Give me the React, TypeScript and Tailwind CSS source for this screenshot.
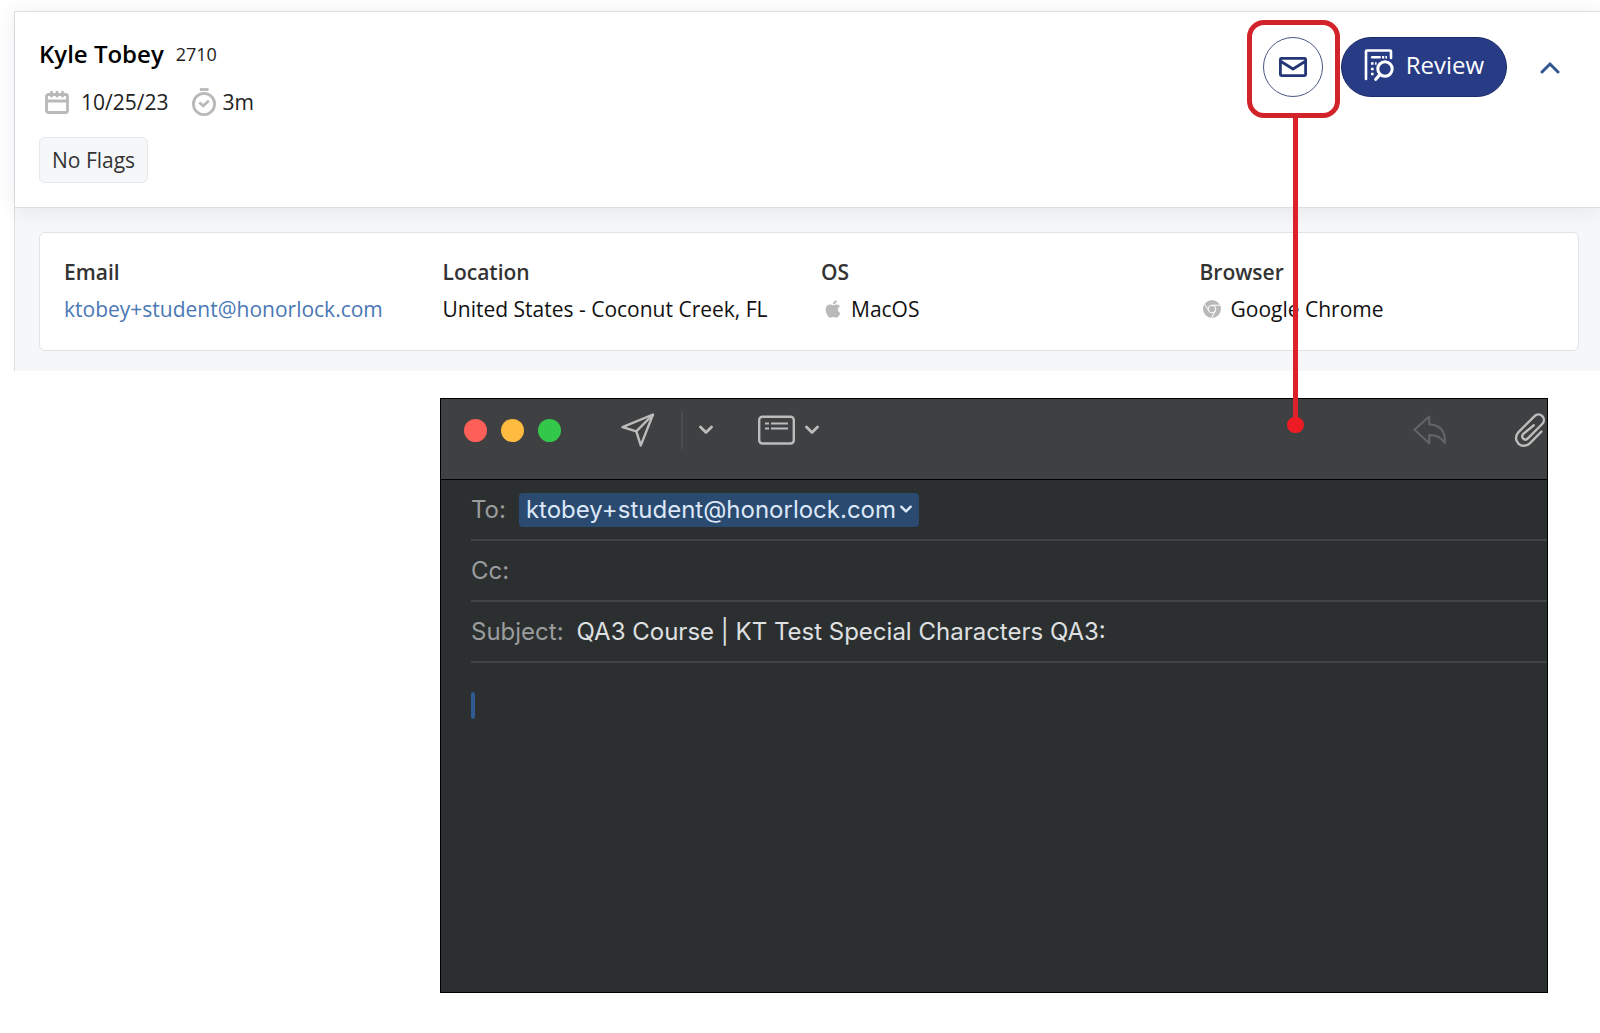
import type { ReactNode } from "react"
import { FaApple } from "react-icons/fa"

function CalendarIcon() {
  return (
    <svg width="24" height="24" viewBox="0 0 24 24" fill="none" stroke="#b9b9b9" strokeLinecap="round" aria-hidden="true">
      <rect x="1.5" y="4.5" width="21" height="18" rx="2" strokeWidth="2.8" />
      <path d="M2 11h20" strokeWidth="2.8" />
      <path d="M6.5 2.2v4M12 2.2v4M17.5 2.2v4" strokeWidth="2.8" />
    </svg>
  )
}

function StopwatchIcon() {
  return (
    <svg width="24" height="28" viewBox="0 0 24 28" fill="none" stroke="#b9b9b9" aria-hidden="true">
      <circle cx="12" cy="16" r="10.6" strokeWidth="2.8" />
      <path d="M7.8 1.5h8.8" strokeWidth="2.8" />
      <path d="M7.3 14.5l4 3.3 5.5-5" strokeWidth="2.8" />
    </svg>
  )
}

function MailIcon() {
  return (
    <svg width="28" height="20" viewBox="0 0 28 20" fill="none" stroke="#253676" strokeWidth="2.8" aria-hidden="true">
      <rect x="1.4" y="1.4" width="25.2" height="17.2" rx="1" />
      <path d="M2 4.5l12 7.5 12-7.5" strokeLinejoin="round" />
    </svg>
  )
}

function ReviewIcon() {
  return (
    <svg width="30" height="32" viewBox="0 0 30 32" fill="none" stroke="#fff" aria-hidden="true">
      <path d="M2 30V2.5q0-1 1-1h23q1 0 1 1V9" strokeWidth="2.6" strokeLinecap="round" strokeLinejoin="round" />
      <path d="M8.2 8.2h7.5" strokeWidth="2.6" strokeLinecap="round" />
      <path d="M18 8.2h2.2M21.4 8.2h1.6" strokeWidth="2.4" />
      <path d="M7 14.5h2.6M11 14.5h1.6M7 20h2.6M7 25h2.6" strokeWidth="2.5" />
      <circle cx="21" cy="20" r="7.2" strokeWidth="3" />
      <path d="M15.8 25.7l-4 4.5" strokeWidth="3.2" strokeLinecap="round" />
    </svg>
  )
}

function ChromeIcon() {
  return (
    <svg width="18" height="18" viewBox="0 0 18 18" fill="none" aria-hidden="true">
      <circle cx="9" cy="9" r="9" fill="#b9b9b9" />
      <circle cx="9" cy="9" r="3.8" stroke="#fff" strokeWidth="1" />
      <path d="M9 5.2h8M5.7 10.9L1.9 4.4M12.3 10.9L8.6 17.8" stroke="#fff" strokeWidth="1" />
    </svg>
  )
}

function SendIcon() {
  return (
    <svg width="34" height="34" viewBox="0 0 34 34" fill="none" stroke="#bcbcbd" strokeWidth="2.4" strokeLinejoin="round" aria-hidden="true">
      <path d="M32 1.5L1.5 14.2l13.8 4.2 4.5 14z" />
      <path d="M32 1.5L15.3 18.4" />
    </svg>
  )
}

function HeaderFieldsIcon() {
  return (
    <svg width="37" height="30" viewBox="0 0 37 30" fill="none" stroke="#bcbcbd" aria-hidden="true">
      <rect x="1.2" y="1.7" width="34.6" height="26.8" rx="3.2" strokeWidth="2.4" />
      <path d="M7 8.6h4M13 8.6h17M7 13.6h4M13 13.6h17" strokeWidth="2" />
    </svg>
  )
}

function ReplyIcon() {
  return (
    <svg width="34" height="30" viewBox="0 0 34 30" fill="none" stroke="#626364" strokeWidth="2.2" strokeLinejoin="round" aria-hidden="true">
      <path d="M16.2 1.5L1.5 14.8l14.7 13.4v-8c7 0 11.5 1.3 15.5 7.8C32.8 16 26.5 9.6 16.2 9.3z" />
    </svg>
  )
}

function PaperclipIcon() {
  return (
    <svg width="32" height="34" viewBox="0 0 32 34" fill="none" stroke="#bcbcbd" strokeWidth="2.4" strokeLinecap="round" strokeLinejoin="round" aria-hidden="true">
      <path d="M27.5 18.5L15.8 30.3c-3.4 3.3-8.3 3.2-11.4.3-3.3-3.2-3.2-8 .1-11.4L20.3 3.3c2.4-2.4 5.8-2.3 8-.2 2.3 2.3 2.2 5.5-.1 7.9L13.9 25.4c-1.5 1.5-3.4 1.4-4.7.2-1.3-1.4-1.3-3.3.2-4.8L19.8 12.3" />
    </svg>
  )
}

function ChevronDown({ width = 14, color = "#bcbcbd" }: { width?: number; color?: string }) {
  return (
    <svg width={width} height={(width * 10) / 14} viewBox="0 0 14 10" fill="none" stroke={color} strokeWidth="2.8" strokeLinecap="round" strokeLinejoin="round" aria-hidden="true">
      <path d="M1.5 2l5.5 5.5L12.5 2" />
    </svg>
  )
}

// Red frame round the mail button, with a line down to the message window.
function Callout() {
  return (
    <div className="pointer-events-none absolute -left-4 -top-[17px] h-[98px] w-[93px] rounded-[17px] border-[5px] border-[#d2232a]">
      <div className="absolute left-[41px] top-[93px] h-[308px] w-[5px] bg-[#dc222b]" />
      <div className="absolute left-[35px] top-[392px] h-4 w-[17px] rounded-full bg-[#ed1c24]" />
    </div>
  )
}

function Detail({ label, children }: { label: string; children: ReactNode }) {
  return (
    <div>
      <dt className="font-semibold text-[#333]">{label}</dt>
      <dd className="mt-[7px] flex items-center whitespace-nowrap text-[#111]">{children}</dd>
    </div>
  )
}

function SessionCard() {
  return (
    <section className="border-l border-[#dcdee1] text-[21px] leading-[30px]">
      <header className="relative z-10 flex items-start justify-between border-y border-[#dcdee1] bg-white pb-6 pl-6 pr-[26px] pt-[25px] shadow-[0_2px_20px_rgba(40,50,90,0.09)]">
        <div>
          <div className="mb-4 flex items-center gap-3">
            <h1 className="text-2xl leading-[34px] font-semibold text-black">Kyle Tobey</h1>
            <span className="text-lg leading-[34px] text-[#222]">2710</span>
          </div>
          <div className="mb-5 flex items-center text-[#222]">
            <span className="ml-1.5 flex items-center gap-3">
              <CalendarIcon />
              10/25/23
            </span>
            <span className="ml-6 flex items-center gap-1.5">
              <StopwatchIcon />
              3m
            </span>
          </div>
          <div className="flex">
            <span className="rounded-md border border-[#e6e8ea] bg-[#f6f7f9] px-3 py-[7px] text-[#333]">No Flags</span>
          </div>
        </div>

        <div className="flex items-center gap-[18px]">
          <div className="relative">
            <button
              type="button"
              aria-label="Email student"
              className="flex size-[60px] items-center justify-center rounded-full border border-[#4a5684] bg-white"
            >
              <MailIcon />
            </button>
            <Callout />
          </div>
          <button
            type="button"
            className="flex h-[60px] w-[166px] items-center justify-center gap-3 rounded-full border border-[#1a2b6b] bg-[#283c85] pb-1 text-2xl text-white"
          >
            <ReviewIcon />
            Review
          </button>
          <button type="button" aria-label="Collapse" className="flex h-[60px] w-[49px] items-center justify-center">
            <svg width="20" height="13" viewBox="0 0 20 13" fill="none" stroke="#2f5794" strokeWidth="3" strokeLinecap="round" aria-hidden="true">
              <path d="M2 11l8-8 8 8" />
            </svg>
          </button>
        </div>
      </header>

      <div className="bg-[#f6f7f9] pb-5 pl-6 pr-[21px] pt-6">
        <dl className="grid grid-cols-4 rounded-md border border-[#e0e2e5] bg-white pb-[26px] pl-6 pt-6">
          <Detail label="Email">
            <a href="mailto:ktobey+student@honorlock.com" className="text-[#4a78b5]">
              ktobey+student@honorlock.com
            </a>
          </Detail>
          <Detail label="Location">United States - Coconut Creek, FL</Detail>
          <Detail label="OS">
            <FaApple className="ml-0.5 mr-2 size-5 text-[#b9b9b9]" aria-hidden="true" />
            MacOS
          </Detail>
          <Detail label="Browser">
            <span className="ml-[3px] mr-2.5">
              <ChromeIcon />
            </span>
            Google Chrome
          </Detail>
        </dl>
      </div>
    </section>
  )
}

function MailWindow() {
  return (
    <section className="ml-[440px] mr-[52px] mt-[27px] border border-black bg-[#2c2f30] font-['Inter',sans-serif] text-2xl">
      <div className="border-b border-black bg-[#3f4041] pb-[18px]">
        <div className="flex h-[62px] items-center pl-[23px] pr-px">
          <div className="flex gap-[14px]">
            <button type="button" aria-label="Close" className="size-[23px] rounded-full bg-[#fe5f58]" />
            <button type="button" aria-label="Minimize" className="size-[23px] rounded-full bg-[#fdbb40]" />
            <button type="button" aria-label="Zoom" className="size-[23px] rounded-full bg-[#34c84a]" />
          </div>
          <button type="button" aria-label="Send" className="ml-[60px]">
            <SendIcon />
          </button>
          <div className="ml-[26px] h-[38px] w-0.5 bg-[#4b4c4d]" />
          <button type="button" aria-label="Send options" className="ml-4">
            <ChevronDown />
          </button>
          <button type="button" aria-label="Header fields" className="ml-[45px]">
            <HeaderFieldsIcon />
          </button>
          <button type="button" aria-label="Header field options" className="ml-2.5">
            <ChevronDown />
          </button>
          <button type="button" aria-label="Reply" className="ml-auto">
            <ReplyIcon />
          </button>
          <button type="button" aria-label="Attach file" className="ml-[67px]">
            <PaperclipIcon />
          </button>
        </div>
      </div>

      <form className="pl-[30px] text-[#dfe0e1]">
        <div className="flex h-[61px] items-center gap-[13px] border-b-2 border-[#414445]">
          <span className="text-[#9a9c9d]">To:</span>
          <button type="button" className="flex h-[34px] items-center gap-1 rounded bg-[#2b4a70] px-[7px] text-[#dce8f8]">
            ktobey+student@honorlock.com
            <ChevronDown width={12} color="#dce8f8" />
          </button>
        </div>
        <div className="flex h-[61px] items-center gap-[13px] border-b-2 border-[#414445]">
          <label htmlFor="cc" className="text-[#9a9c9d]">Cc:</label>
          <input id="cc" type="text" className="min-w-0 flex-1 bg-transparent outline-none" />
        </div>
        <div className="flex h-[61px] items-center gap-[13px] border-b-2 border-[#414445]">
          <label htmlFor="subject" className="text-[#9a9c9d]">Subject:</label>
          <input
            id="subject"
            type="text"
            defaultValue="QA3 Course | KT Test Special Characters QA3:"
            className="min-w-0 flex-1 bg-transparent outline-none"
          />
        </div>
        <div className="flex pt-7">
          <span className="mt-px h-[27px] w-1 rounded-sm bg-[#2f5a92]" />
          <textarea aria-label="Message" rows={9} className="h-[301px] flex-1 resize-none bg-transparent outline-none" />
        </div>
      </form>
    </section>
  )
}

export default function App() {
  return (
    <main className="overflow-hidden bg-white pb-10 pl-[14px] pt-[11px] font-['Open_Sans',sans-serif]">
      <SessionCard />
      <div className="-ml-[14px]">
        <MailWindow />
      </div>
    </main>
  )
}
